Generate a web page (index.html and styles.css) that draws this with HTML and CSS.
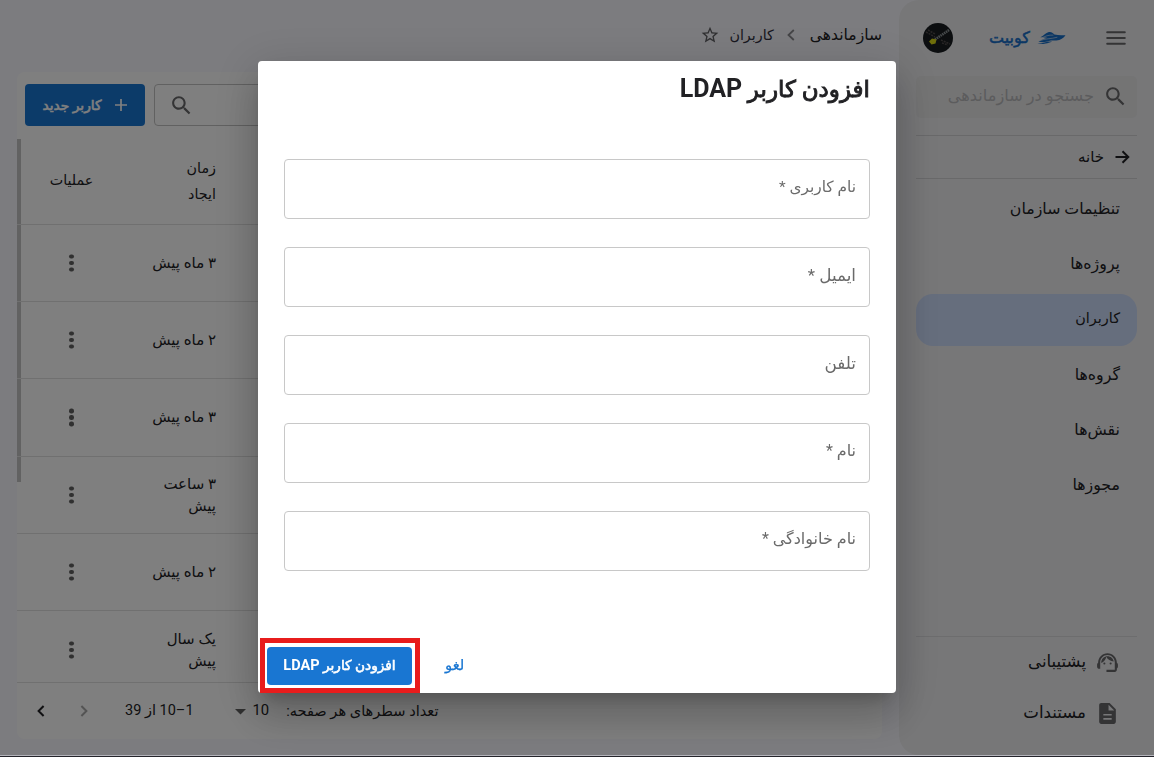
FILE: index.html
```html
<!DOCTYPE html>
<html lang="fa" dir="rtl">
<head>
<meta charset="utf-8">
<title>کوبیت</title>
<link rel="stylesheet" href="styles.css">
</head>
<body>
<div class="app">
  <aside class="sidebar">
    <header class="brand-row">
      <svg class="menu-icon" viewBox="0 0 20 14"><path d="M1.200 1.200h17.600M1.200 7h17.600M1.200 12.800h17.600"/></svg>
      <div class="brand">
        <svg class="boat" viewBox="0 0 30 14"><path d="M3.500 6.200C7 4.500 8.500 1.800 11.500 1c3-.7 4.500.2 6.500 2.500 4 1 8 .8 11.500.6C27.500 7 24.500 9 20 9.600c-2 .3-3.500-.2-5.500.1-2 .4-3 .9-5 1.300-3 .6-5.500.2-8 0 2.500-2 6-3.300 9-4.200-2.500-.4-4.500-.8-7-.6z"/><path d="M.5 13c3.500-.3 5.500-1 8-1.600 2.500-.5 4.500-.8 7-.6-2.500.6-4 1.400-6.500 1.900-3 .6-5.500.7-8.500.3z"/><path class="boat-gap" d="M2.500 10C9 7.200 14 8.200 21 6.200M5 7C8 5.200 12 3.700 17 4"/></svg>
        <span>کوبیت</span>
      </div>
      <svg class="avatar" viewBox="0 0 30 30"><circle cx="15" cy="15" r="15" fill="#181d20"/><path d="M3 9l9 5M5 7l7 4M18 17l9 4M19 20l6 2" stroke="#514b4c" stroke-width="1.500" stroke-dasharray="2 1"/><path d="M12 16.500 26 7" stroke="#8f9599" stroke-width="2.600" stroke-dasharray="1.500 .7"/><path d="M6 18.500l3-3 4.500 1-1 4-4 1z" fill="#dcdc14"/></svg>
    </header>
    <div class="side-search">
      <svg class="icon" viewBox="0 0 24 24"><path d="M15.500 14h-.79l-.28-.27C15.410 12.590 16 11.110 16 9.500 16 5.910 13.090 3 9.500 3S3 5.910 3 9.500 5.910 16 9.500 16c1.610 0 3.090-.59 4.230-1.570l.27.28v.79l5 4.990L20.490 19l-4.990-5zm-6 0C7.010 14 5 11.990 5 9.500S7.010 5 9.500 5 14 7.010 14 9.500 11.990 14 9.500 14z"/></svg>
      <span>جستجو در سازماندهی</span>
    </div>
    <a class="home">
      <svg viewBox="0 0 16 16"><path d="M1.500 8h12.500M8.500 2.200 14.300 8l-5.800 5.800"/></svg>
      <span>خانه</span>
    </a>
    <nav class="nav">
      <a>تنظیمات سازمان</a>
      <a>پروژه‌ها</a>
      <a class="selected">کاربران</a>
      <a>گروه‌ها</a>
      <a>نقش‌ها</a>
      <a>مجوزها</a>
    </nav>
    <div class="side-foot">
      <a><svg class="icon" viewBox="0 0 24 24"><path d="M21 12.220C21 6.730 16.740 3 12 3c-4.690 0-9 3.650-9 9.280-.6.340-1 .98-1 1.720v2c0 1.100.9 2 2 2h1v-6.100c0-3.870 3.130-7 7-7s7 3.130 7 7V19h-8v2h8c1.100 0 2-.9 2-2v-1.220c.59-.31 1-.92 1-1.640v-2.300c0-.7-.41-1.310-1-1.620z"/><circle cx="9" cy="13" r="1"/><circle cx="15" cy="13" r="1"/><path d="M18 11.030C17.520 8.180 15.040 6 12.050 6c-3.030 0-6.290 2.510-6.030 6.450 2.470-1.010 4.330-3.210 4.860-5.890 1.310 2.630 4 4.440 7.120 4.470z"/></svg><span>پشتیبانی</span></a>
      <a><svg class="icon" viewBox="0 0 24 24"><path d="M14 2H6c-1.100 0-2 .9-2 2v16c0 1.100.9 2 2 2h12c1.100 0 2-.9 2-2V8l-6-6zm2 16H8v-1.600h8V18zm0-4H8v-1.600h8V14zm-3-5V3.500L18.500 9H13z"/></svg><span>مستندات</span></a>
    </div>
  </aside>
  <main class="main">
    <div class="crumbs">
      <span>سازماندهی</span>
      <svg class="sep" viewBox="0 0 8 12"><path d="M6.800 1 1.500 6l5.300 5"/></svg>
      <span class="crumb-last">کاربران</span>
      <svg class="star" viewBox="0 0 24 24"><path d="M22 9.240l-7.190-.62L12 2 9.190 8.630 2 9.240l5.460 4.730L5.820 21 12 17.270 18.180 21l-1.630-7.030L22 9.240zM12 15.400l-3.760 2.270 1-4.280-3.320-2.880 4.380-.38L12 6.100l1.710 4.040 4.380.38-3.320 2.880 1 4.280L12 15.400z"/></svg>
    </div>
    <section class="card">
      <div class="toolbar">
        <div class="table-search"><svg class="icon" viewBox="0 0 24 24"><path d="M15.500 14h-.79l-.28-.27C15.410 12.590 16 11.110 16 9.500 16 5.910 13.090 3 9.500 3S3 5.910 3 9.500 5.910 16 9.500 16c1.610 0 3.090-.59 4.230-1.570l.27.28v.79l5 4.990L20.490 19l-4.990-5zm-6 0C7.010 14 5 11.990 5 9.500S7.010 5 9.500 5 14 7.010 14 9.500 11.990 14 9.500 14z"/></svg></div>
        <button class="new-user"><svg viewBox="0 0 14 14"><path d="M7 1v12M1 7h12"/></svg><span>کاربر جدید</span></button>
      </div>
      <div class="table">
        <div class="rows">
          <div class="row head"><div class="time">زمان<br>ایجاد</div><div class="act">عملیات</div></div>
          <div class="row"><div class="time">۳ ماه پیش</div><div class="act"><i class="dots"></i></div></div>
          <div class="row"><div class="time">۲ ماه پیش</div><div class="act"><i class="dots"></i></div></div>
          <div class="row"><div class="time">۳ ماه پیش</div><div class="act"><i class="dots"></i></div></div>
          <div class="row"><div class="time">۳ ساعت<br>پیش</div><div class="act"><i class="dots"></i></div></div>
          <div class="row"><div class="time">۲ ماه پیش</div><div class="act"><i class="dots"></i></div></div>
          <div class="row last"><div class="time">یک سال<br>پیش</div><div class="act"><i class="dots"></i></div></div>
        </div>
        <div class="scroll-thumb"></div>
      </div>
      <footer class="pager">
        <span class="per-page">تعداد سطرهای هر صفحه:</span>
        <span class="size">10</span>
        <svg class="drop" viewBox="0 0 10 5"><path d="M0 0h10L5 5z"/></svg>
        <span class="range">1–10 از 39</span>
        <svg class="chev off" viewBox="0 0 8 12"><path d="M1.400 1 6.400 6l-5 5"/></svg>
        <svg class="chev" viewBox="0 0 8 12"><path d="M6.600 1 1.600 6l5 5"/></svg>
      </footer>
    </section>
  </main>
</div>
<div class="backdrop">
  <div class="dialog" role="dialog">
    <h2>افزودن کاربر <bdi>LDAP</bdi></h2>
    <form class="fields">
      <label class="username">نام کاربری *</label>
      <label class="email">ایمیل *</label>
      <label class="phone">تلفن</label>
      <label>نام *</label>
      <label>نام خانوادگی *</label>
    </form>
    <div class="actions">
      <button type="button" class="cancel">لغو</button>
      <div class="highlight"><button type="button" class="submit">افزودن کاربر <bdi>LDAP</bdi></button></div>
    </div>
  </div>
</div>
<div class="bottom-edge"></div>
</body>
</html>
```

FILE: styles.css
```css
* { box-sizing: border-box; }
body {
  margin: 0;
  height: 757px;
  overflow: hidden;
  background: #f9f9ff;
  font-family: Roboto, "DejaVu Sans", sans-serif;
  font-size: 15px;
  line-height: 22px;
  color: #212124;
}
svg { display: block; flex: none; fill: currentColor; }
button { border: 0; font: inherit; padding: 0; }
.app { display: flex; height: 755px; }
.icon { width: 25px; height: 25px; color: #68686a; }

/* Sidebar */
.sidebar {
  flex: none;
  width: 255px;
  padding: 0 17px;
  background: #eeeef1;
  border-radius: 20px 0 0 20px;
  display: flex;
  flex-direction: column;
}
.brand-row {
  height: 76px;
  padding: 0 11px 1px 7px;
  display: flex;
  align-items: center;
  justify-content: space-between;
}
.menu-icon, .home svg, .sep, .new-user svg, .chev { fill: none; stroke: currentColor; stroke-width: 2; }
.menu-icon { width: 20px; height: 14px; color: #68686a; stroke-linecap: round; }
.brand {
  margin-right: 4px;
  display: flex;
  align-items: center;
  gap: 7px;
  color: #176fc9;
  font-size: 16px;
}
.brand span { -webkit-text-stroke: .5px; }
.boat { width: 29px; height: 14px; }
.boat-gap { fill: none; stroke: #eeeef1; stroke-width: .6; }
.avatar { width: 30px; height: 30px; }
.side-search {
  height: 42px;
  border-radius: 5px;
  background: #e8e8e9;
  padding: 0 9px 2px;
  display: flex;
  align-items: center;
  gap: 9px;
  color: #b8b8bb;
  font-size: 16.200px;
}
.home {
  margin-top: 17px;
  height: 44px;
  border: solid #d2d2d5;
  border-width: 1px 0;
  padding: 0 7px 1px 0;
  display: flex;
  align-items: center;
  gap: 10px;
  font-size: 15px;
}
.home svg { width: 16px; height: 16px; }
.nav { margin-top: 5px; display: flex; flex-direction: column; gap: 4px; font-size: 15.800px; }
.nav a {
  height: 51.200px;
  border-radius: 17px;
  padding: 0 17px 1px;
  display: flex;
  align-items: center;
}
.nav .selected { background: #ccdcfa; font-size: 14.400px; }
.side-foot {
  margin-top: auto;
  height: 119px;
  border-top: 1px solid #dadadd;
  padding: 0 17px;
  font-size: 16.600px;
}
.side-foot a { height: 51px; display: flex; align-items: center; gap: 9px; }
.side-foot span { padding-bottom: 2px; }

/* Main */
.main { flex: 1; padding: 0 17px 16px; display: flex; flex-direction: column; }
.crumbs { height: 72px; padding-bottom: 2px; display: flex; align-items: center; font-size: 15.600px; }
.sep { width: 8px; height: 12px; margin: 0 15px 0 13px; color: #8a8a8e; stroke-width: 1.800; }
.crumb-last { color: #303040; font-size: 14.300px; }
.star { width: 20px; height: 20px; margin-right: 9px; color: #606064; }
.card { flex: 1; background: #fff; border-radius: 8px; display: flex; flex-direction: column; }
.toolbar { height: 67px; padding: 12px 8px 13px; display: flex; gap: 9px; justify-content: flex-end; }
.table-search {
  width: 300px;
  border: 1px solid #c2c2c2;
  border-radius: 4px;
  padding: 0 14px;
  display: flex;
  align-items: center;
  justify-content: flex-end;
}
.new-user {
  width: 120px;
  border-radius: 4px;
  background: #1976d2;
  color: #fff;
  font-size: 13.800px;
  display: flex;
  align-items: center;
  justify-content: center;
  gap: 12px;
}
.new-user span { -webkit-text-stroke: .6px; }
.new-user svg { width: 14px; height: 14px; stroke-width: 1.700; }
.table { height: 544px; direction: ltr; display: flex; flex-direction: row-reverse; }
.rows { flex: 1; margin-left: -4px; direction: rtl; }
.scroll-thumb { width: 4px; height: 343px; background: #c4c4c4; }
.row {
  height: 77.400px;
  border-bottom: 1px solid #e0e0e0;
  display: flex;
  align-items: center;
  justify-content: flex-end;
  font-size: 15px;
}
.row.head { height: 85.500px; line-height: 26px; font-size: 14.300px; }
.row.head .act { padding-bottom: 2px; }
.row.last { height: 71.500px; }
.row.last .act, .row.last .time { padding-top: 6px; }
.time { width: 90px; }
.act { width: 109px; display: flex; justify-content: center; }
.dots {
  width: 4.400px;
  height: 4.400px;
  border-radius: 50%;
  background: #606060;
  box-shadow: 0 -6.500px #606060, 0 6.500px #606060;
}
.pager { flex: 1; display: flex; justify-content: flex-end; align-items: center; padding: 0 0 1px 20px; font-size: 14.600px; }
.size { margin-right: 17px; font-size: 14.800px; padding-bottom: 2px; }
.drop { width: 11px; height: 5.500px; margin: 3px 7px 0 41px; color: #606060; }
.range { font-size: 14.500px; }
.chev { width: 8px; height: 12px; }
.chev.off { color: #a8a8a8; margin: 0 37px 0 35px; }

/* Dialog */
.backdrop { position: fixed; inset: 0; background: rgba(0, 0, 0, .5); padding: 61px 0 0; }
.dialog {
  width: 638px;
  height: 632px;
  margin: 0 258px 0 auto;
  background: #fff;
  border-radius: 4px;
  box-shadow: 0 11px 15px -7px rgba(0,0,0,.2), 0 24px 38px 3px rgba(0,0,0,.14), 0 9px 46px 8px rgba(0,0,0,.12);
  display: flex;
  flex-direction: column;
}
.dialog h2 {
  margin: 0;
  padding: 11px 26px 0;
  height: 97.500px;
  font-size: 23px;
  line-height: 34px;
  font-weight: 400;
  -webkit-text-stroke: .9px;
}
.dialog bdi { font-weight: 700; -webkit-text-stroke: 0; }
.dialog h2 bdi { font-size: 25px; }
.fields { padding: 0 26px; display: flex; flex-direction: column; gap: 28.200px; }
.fields label {
  height: 60px;
  border: 1px solid #c8c8c8;
  border-radius: 4px;
  padding: 0 13px 4px;
  display: flex;
  align-items: center;
  color: #6a6a6a;
  font-size: 16px;
}
.fields .username { font-size: 15.400px; }
.fields .email, .fields .phone { font-size: 16.800px; }
.actions { margin-top: auto; padding-left: 2px; display: flex; justify-content: flex-end; align-items: center; gap: 25px; }
.cancel { background: none; color: #1976d2; font-size: 14.800px; padding-bottom: 2px; -webkit-text-stroke: .25px; }
.highlight { width: 160px; height: 55px; border: 5px solid #e81c1c; padding: 4px 3px 3px 2px; display: flex; }
.submit {
  flex: 1;
  padding-bottom: 2px;
  border-radius: 4px;
  background: #1976d2;
  color: #fff;
  font-size: 13.700px;
  -webkit-text-stroke: .6px;
}
.submit bdi { font-size: 14.500px; }
.bottom-edge { position: fixed; inset: auto 0 0; height: 2px; background: #24242b; border-top: 1px solid #b4b4bb; }
```
